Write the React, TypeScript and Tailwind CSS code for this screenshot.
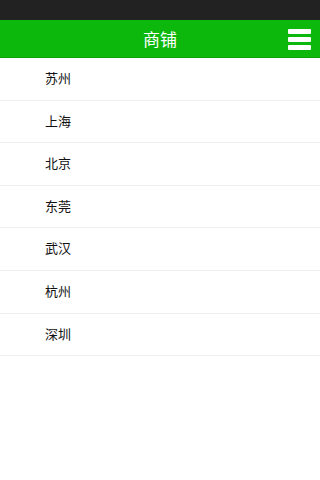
const cities = ["苏州", "上海", "北京", "东莞", "武汉", "杭州", "深圳"];

export default function App() {
  return (
    <div
      className="w-[320px] h-[480px] bg-white overflow-hidden"
      style={{ fontFamily: '"Noto Sans CJK SC", "Noto Sans", sans-serif' }}
    >
      {/* Status bar */}
      <div className="h-[20px] bg-[#222222]" />

      {/* Header */}
      <div className="relative h-[38px] bg-[#0cb80c] flex items-center justify-center border-b border-[#0aa50a]">
        <span className="text-white text-[17px] leading-none">商铺</span>
        <div className="absolute right-[9px] top-[9px] w-[23px] flex flex-col gap-[3px]">
          <div className="h-[5px] bg-white rounded-[1px]" />
          <div className="h-[5px] bg-white rounded-[1px]" />
          <div className="h-[5px] bg-white rounded-[1px]" />
        </div>
      </div>

      {/* List */}
      <ul>
        {cities.map((c) => (
          <li
            key={c}
            className="h-[42.6px] flex items-center pl-[45px] pb-[2px] border-b border-[#efefef] text-[13px] text-[#111111]"
          >
            {c}
          </li>
        ))}
      </ul>
    </div>
  );
}
